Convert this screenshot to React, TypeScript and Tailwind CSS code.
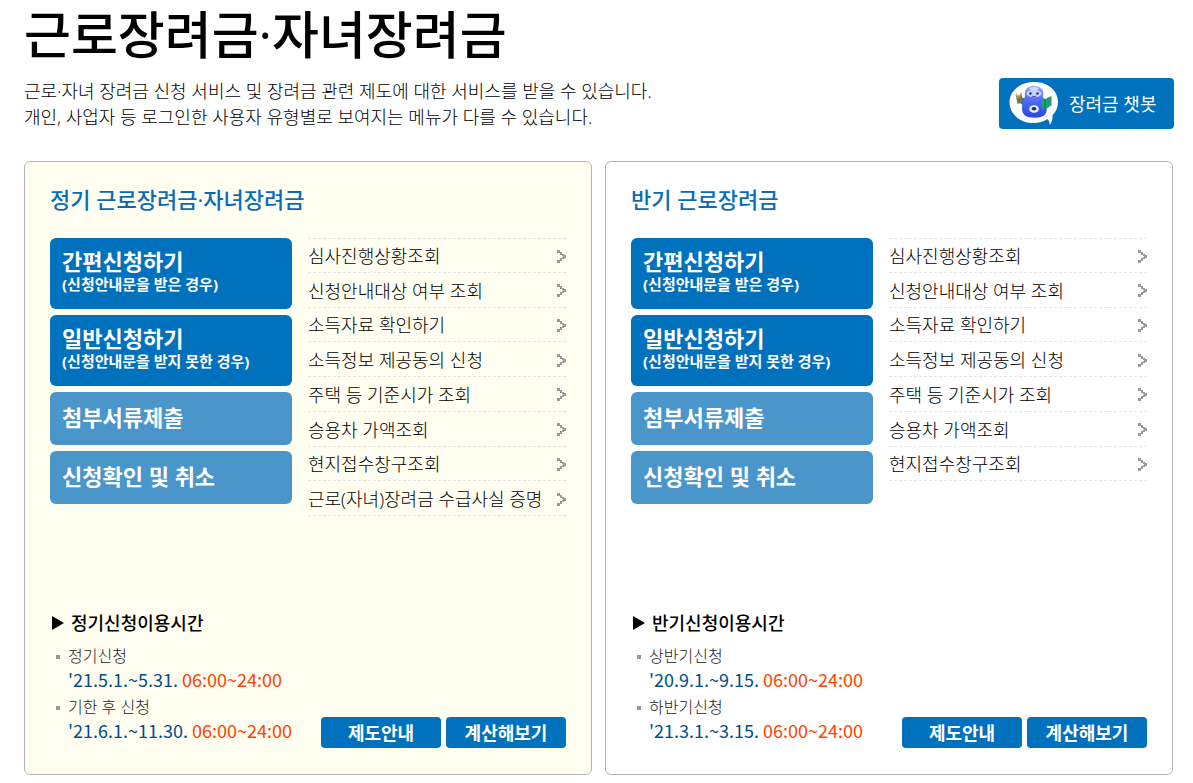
const FONT = "font-['Open_Sans','Noto_Sans_CJK_KR',sans-serif]";

type Period = { name: string; dates: string; hours: string };

type Program = {
  id: string;
  title: string;
  background: string;
  links: string[];
  scheduleTitle: string;
  periods: Period[];
};

const COMMON_LINKS = [
  "심사진행상황조회",
  "신청안내대상 여부 조회",
  "소득자료 확인하기",
  "소득정보 제공동의 신청",
  "주택 등 기준시가 조회",
  "승용차 가액조회",
  "현지접수창구조회",
];

const PROGRAMS: Program[] = [
  {
    id: "regular",
    title: "정기 근로장려금·자녀장려금",
    background: "bg-[#fffef0]",
    links: [...COMMON_LINKS, "근로(자녀)장려금 수급사실 증명"],
    scheduleTitle: "정기신청이용시간",
    periods: [
      { name: "정기신청", dates: "'21.5.1.~5.31.", hours: "06:00~24:00" },
      { name: "기한 후 신청", dates: "'21.6.1.~11.30.", hours: "06:00~24:00" },
    ],
  },
  {
    id: "half",
    title: "반기 근로장려금",
    background: "bg-white",
    links: COMMON_LINKS,
    scheduleTitle: "반기신청이용시간",
    periods: [
      { name: "상반기신청", dates: "'20.9.1.~9.15.", hours: "06:00~24:00" },
      { name: "하반기신청", dates: "'21.3.1.~3.15.", hours: "06:00~24:00" },
    ],
  },
];

function ChatbotIcon() {
  return (
    <svg width="50" height="43" viewBox="0 0 50 43" aria-hidden="true">
      <defs>
        <linearGradient id="bot" x1="0" y1="0" x2="0" y2="1">
          <stop offset="0" stopColor="#8fa3fa" />
          <stop offset="0.4" stopColor="#5672f6" />
          <stop offset="1" stopColor="#2a45e0" />
        </linearGradient>
      </defs>
      <path
        d="M25 0C38.800 0 49 8.500 49 20C49 25.500 46.800 30 43.500 33.200C43.800 37 43 40 40.800 43C40.800 40.500 40 38.500 38.500 37C34.500 39.600 30 41 25 41C11 41 0.500 32 0.500 20.500C0.500 9 11 0 25 0Z"
        fill="#fff"
      />
      <path d="M18 15L10 17L11 21L16 25Z" fill="#3f5bea" />
      <path d="M32 15L38 18L37 23L33 25Z" fill="#3f5bea" />
      <path
        d="M25 4C30.800 4 34.300 7.200 34.300 11.500C34.300 13.500 33.600 15 34.500 17C38 22 39.500 30 35 33.500C31 36.500 20 36.500 16 33.500C11.500 30 12.500 22 15.500 17C16.400 15 15.800 13.500 15.800 11.500C15.800 7.200 19.300 4 25 4Z"
        fill="url(#bot)"
      />
      <ellipse cx="25" cy="6.500" rx="4.500" ry="1.500" fill="#dbe2ff" />
      <ellipse cx="25" cy="11.500" rx="7.500" ry="3.800" fill="#c6d0fd" />
      <circle cx="21.500" cy="11.500" r="1.200" fill="#252b8e" />
      <circle cx="28.500" cy="11.500" r="1.200" fill="#252b8e" />
      <path d="M23 14Q25 15.500 27 14" fill="none" stroke="#3947b8" strokeWidth="1" />
      <ellipse cx="25" cy="27" rx="4.800" ry="3.800" fill="#edf0ff" />
      <ellipse cx="25" cy="26.800" rx="2.500" ry="1.800" fill="#202b72" />
      <path d="M7 14L13 13L14 20L8.500 22Z" fill="#687b4e" />
      <path d="M7 12L9.500 16M12.500 11L10.500 15" stroke="#c99d42" strokeWidth="1.500" />
      <path d="M32.500 18L36 17L42.500 14L42.500 23.500L36 27.500L32.500 26Z" fill="#1fa077" />
      <path d="M36 17L36 27.500" stroke="#087552" strokeWidth="1" />
    </svg>
  );
}

function Arrow() {
  return (
    <svg
      width="9"
      height="13"
      viewBox="0 0 9 13"
      fill="#999"
      shapeRendering="crispEdges"
      className="shrink-0"
      aria-hidden="true"
    >
      <path d="M0 0h3v3h-3zM3 2h2v3h-2zM5 4h2v2h-2zM6 5h3v3h-3zM5 7h2v2h-2zM3 8h2v3h-2zM0 10h3v3h-3z" />
    </svg>
  );
}

function ApplyButton({ label, note }: { label: string; note?: string }) {
  return note ? (
    <button
      type="button"
      className="flex min-h-[71px] flex-col items-start rounded-md bg-[#0071bd] px-3 pt-[11px] pb-[14px] text-left font-bold text-white"
    >
      <span className="text-[22px] leading-6">{label}</span>
      <span className="text-[15px] leading-[22px]">{note}</span>
    </button>
  ) : (
    <button
      type="button"
      className="min-h-[53px] rounded-md bg-[#4a96ca] px-3 pb-[3px] text-left text-[22px] leading-6 font-bold text-white"
    >
      {label}
    </button>
  );
}

function ProgramCard({ program }: { program: Program }) {
  return (
    <section
      aria-labelledby={program.id}
      className={`flex flex-col rounded-md border border-[#b3b3b3] px-[25px] pt-6 pb-[26px] ${program.background}`}
    >
      <h2 id={program.id} className="text-[22px] leading-[26px] font-medium text-[#0b6bb8]">
        {program.title}
      </h2>

      <div className="mt-[26px] flex gap-4">
        <div className="flex w-[46.9%] shrink-0 flex-col gap-1.5">
          <ApplyButton label="간편신청하기" note="(신청안내문을 받은 경우)" />
          <ApplyButton label="일반신청하기" note="(신청안내문을 받지 못한 경우)" />
          <ApplyButton label="첨부서류제출" />
          <ApplyButton label="신청확인 및 취소" />
        </div>
        <ul className="grid min-h-[278px] min-w-0 flex-1 grid-rows-8">
          {program.links.map((link) => (
            <li key={link} className="border-b border-dashed border-[#e6e6e6] first:border-t">
              <a
                href="#"
                className="flex h-full items-center justify-between pt-0.5 text-[18px] leading-6 font-light whitespace-nowrap text-black"
              >
                {link}
                <Arrow />
              </a>
            </li>
          ))}
        </ul>
      </div>

      <h3 className="mt-[94px] flex items-center gap-[7px] text-[18px] leading-[26px] font-medium text-black">
        <svg width="12" height="14" viewBox="0 0 12 14" className="ml-0.5" aria-hidden="true">
          <path d="M0 0L12 7L0 14Z" />
        </svg>
        {program.scheduleTitle}
      </h3>

      <div className="mt-[9px] flex items-end justify-between">
        <ul className="flex flex-col gap-[5px] pb-1.5 pl-1.5">
          {program.periods.map((period) => (
            <li key={period.name} className="flex gap-2 leading-[23px]">
              <span className="mt-[10px] size-1 shrink-0 bg-[#999]" />
              <div>
                <p className="text-[16px] leading-[23px] font-light text-[#222]">{period.name}</p>
                <p className="font-['Noto_Sans_CJK_KR',sans-serif] text-[18px] leading-[23px] whitespace-nowrap text-[#004f8b]">
                  {period.dates} <span className="text-[#ff4200]">{period.hours}</span>
                </p>
              </div>
            </li>
          ))}
        </ul>
        <div className="flex gap-[5px]">
          {["제도안내", "계산해보기"].map((label) => (
            <button
              key={label}
              type="button"
              className="h-[31px] w-[120px] rounded bg-[#0071bd] text-[18px] leading-6 font-bold text-white"
            >
              {label}
            </button>
          ))}
        </div>
      </div>
    </section>
  );
}

export default function App() {
  return (
    <main className={`bg-white pt-1 pr-[19px] pb-2 pl-6 text-black ${FONT}`}>
      <h1 className="text-[51px] leading-[60px] font-medium">근로장려금·자녀장려금</h1>

      <div className="mt-[14px] flex items-start justify-between">
        <p className="text-[18px] leading-[26px] font-light">
          근로·자녀 장려금 신청 서비스 및 장려금 관련 제도에 대한 서비스를 받을 수 있습니다.
          <br />
          개인, 사업자 등 로그인한 사용자 유형별로 보여지는 메뉴가 다를 수 있습니다.
        </p>
        <button
          type="button"
          className="flex h-[51px] w-[175px] shrink-0 items-center gap-2.5 rounded bg-[#0071bd] pl-2.5 text-[18px] leading-6 text-white"
        >
          <ChatbotIcon />
          장려금 챗봇
        </button>
      </div>

      <div className="mt-[31px] mr-px grid grid-cols-2 gap-[13px]">
        {PROGRAMS.map((program) => (
          <ProgramCard key={program.id} program={program} />
        ))}
      </div>
    </main>
  );
}
